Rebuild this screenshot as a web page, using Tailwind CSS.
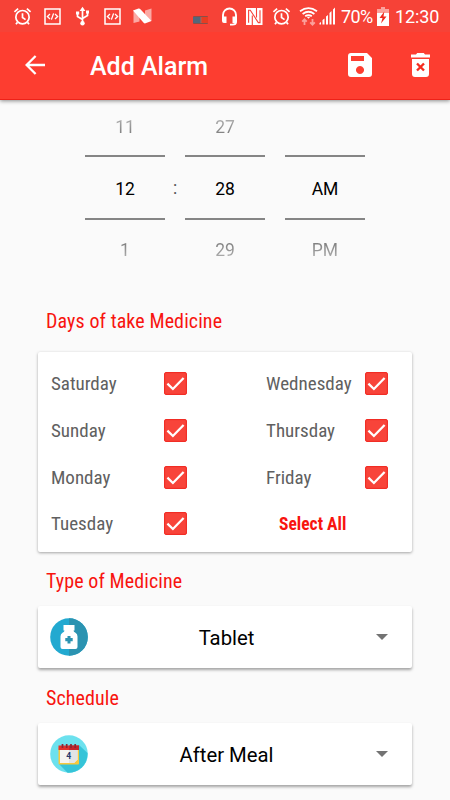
<!DOCTYPE html>
<html lang="en">
<head>
<meta charset="utf-8">
<title>Add Alarm</title>
<script src="https://cdn.jsdelivr.net/npm/@tailwindcss/browser@4"></script>
</head>
<body class="w-[450px] h-[800px] overflow-hidden bg-[#fafafa] font-['Roboto',sans-serif]">
<svg class="hidden">
  <symbol id="clock" viewBox="0 0 20 20"><circle cx="10" cy="10.7" r="7" fill="none" stroke="currentColor" stroke-width="1.8"/><path d="M10 6.5v4.6l3.2 2.2M1.5 5.2 5.4 1.8M18.5 5.2l-3.900-3.400M4.700 16.200l-1.600 2M15.300 16.200l1.600 2" fill="none" stroke="currentColor" stroke-width="1.8"/></symbol>
  <symbol id="code" viewBox="0 0 17 17"><rect x="1" y="1" width="15" height="15" fill="none" stroke="currentColor" stroke-width="1.5"/><path d="M6 6 3.400 8.500 6 11M11 6l2.600 2.500L11 11M9.600 5.400l-2.200 6.200" fill="none" stroke="currentColor" stroke-width="1.3"/></symbol>
  <symbol id="check" viewBox="0 0 23 23"><rect x=".6" y=".6" width="21.8" height="21.8" rx="1.2" fill="#f8443a" stroke="#f02018" stroke-width="1"/><path d="M3.400 11.700 8.900 17 19.600 6" fill="none" stroke="#fff" stroke-width="2.300"/></symbol>
</svg>
<header class="relative h-[100px] bg-[#fd3d30] shadow-[0_1px_4px_rgba(0,0,0,0.45)] border-b border-[#ee2118] text-white">
  <div class="flex h-8 items-center bg-[#f64237] pl-[13px]">
    <svg class="w-[19px] h-[19px] shrink-0"><use href="#clock"/></svg>
    <svg class="ml-[12px] w-[17px] h-[17px] shrink-0"><use href="#code"/></svg>
    <svg class="ml-[14px] w-[15px] h-5 shrink-0" viewBox="0 0 15 20" fill="none" stroke="currentColor" stroke-width="1.7"><path d="M7.500 3v13M2.500 7v3.500l5 3M12.500 6v3.500l-5 3"/><path d="M4.600 5 7.500.8 10.400 5zM1 5.400h3.200v3H1zM11 4.600h3v3h-3z" fill="currentColor" stroke="none"/><circle cx="7.500" cy="17.200" r="2.200" fill="currentColor" stroke="none"/></svg>
    <svg class="ml-[14px] w-[17px] h-[17px] shrink-0"><use href="#code"/></svg>
    <svg class="ml-[12px] w-[19px] h-[16px] shrink-0" viewBox="0 0 19 16" fill="currentColor"><path opacity=".55" d="M.5 2.500 6.500 6v7.500l-6 1.500zM12 2.500l6.500-2v12.500l-6.500-3z"/><path d="M0 2.500 5.500.6Q6.600.3 7.400 1.300L18.500 13l-6 2.300q-1.100.3-1.900-.6z"/></svg>
    <div class="ml-[41px] mt-[7px] h-[8px] w-[15px] shrink-0 rounded-[1px] border-y border-[#8a4f48] bg-linear-to-r from-[#52677b] from-45% to-[#e83c22] to-60%"></div>
    <svg class="ml-[13px] w-[17px] h-[19px] shrink-0" viewBox="0 0 17 19" fill="none" stroke="currentColor"><path d="M2 13V8a6.500 6.500 0 0 1 13 0v7q0 2.600-3.500 2.600H9" stroke-width="1.900"/><path d="M1 9.500h4.500V16H3q-2 0-2-2zM11.500 9.500H16V14q0 2-2 2h-2.500z" fill="currentColor" stroke="none"/></svg>
    <svg class="ml-[8px] w-[17px] h-[17px] shrink-0" viewBox="0 0 17 17"><rect width="16.500" height="17" fill="currentColor"/><path d="M3.500 17V1.800L12.300 11V0M4.200 2l8.800 13V0M5.300 17V6.500" fill="none" stroke="#f64237" stroke-width="0"/><path d="M6.300 17V7.500M10.500 0v9.500M2.600 14.800V2.200h1.700l8 12.400h1.700V2.200" fill="none" stroke="#f64237" stroke-width="1.100"/></svg>
    <svg class="ml-[9px] w-[19px] h-[19px] shrink-0"><use href="#clock"/></svg>
    <svg class="ml-[8px] w-[19px] h-[19px] shrink-0" viewBox="0 0 19 19" fill="none" stroke="currentColor" stroke-width="1.800"><path d="M1 4.200q8.500-6 17 0M3.600 6.900q5.900-4.300 11.800 0M6.200 9.300q3.300-2.400 6.600 0"/><path d="m7.700 9.700 1.800 2 1.800-2z" fill="currentColor" stroke="none"/><path opacity=".5" d="M5.500 18v-5M3.200 14.700l2.300-2.400 2.300 2.400M13.500 12v5M11.200 15.300l2.300 2.400 2.300-2.400"/></svg>
    <svg class="ml-[1px] w-[17px] h-[18px] shrink-0" viewBox="0 0 17 18" fill="currentColor"><path d="M.5 17.500v-1.500l1.500-1v2.500zM3.500 17.500V13l2-1.500v6zM7 17.500v-8l2-1.500v9.500zM10.500 17.500V6l2-2v13.500zM14 17.500V2.500L16 .5v17z"/></svg>
    <span class="ml-[5px] w-[33px] shrink-0 whitespace-nowrap text-[18px] leading-8 tracking-[-0.6px] pt-[1px]">70%</span>
    <svg class="ml-[3px] w-[12px] h-[19px] shrink-0" viewBox="0 0 12 19"><path opacity=".5" d="M4 0h4v2h4v5H0V2h4z" fill="currentColor"/><path d="M0 6h12v13H0z" fill="currentColor"/><path d="M7.300 4.500 2.500 11h3L4 16.500 9.500 9.500h-3z" fill="#f02b20"/></svg>
    <span class="ml-[6px] whitespace-nowrap text-[18px] leading-8 pt-[1px] font-[450] tracking-[-0.1px]">12:30</span>
  </div>
  <div class="flex h-[66px] items-center pl-[25px]">
    <svg class="w-5 h-5" viewBox="0 0 20 20" fill="none" stroke="currentColor" stroke-width="2.300"><path d="M20 10H2M10.600 1 1.600 10l9 9"/></svg>
    <h1 class="ml-[45px] w-[258px] text-[25px] font-medium pt-[3px]">Add Alarm</h1>
    <svg class="w-6 h-6" viewBox="0 0 24 24"><path fill="currentColor" fill-rule="evenodd" d="M3 0h16l5 5v16q0 3-3 3H3q-3 0-3-3V3q0-3 3-3zm0 3v5h13V3zm9 10a4 4 0 1 0 .01 0z"/></svg>
    <svg class="ml-[39px] w-[19px] h-[24px]" viewBox="0 0 19 24"><path fill="currentColor" d="M0 1.500h5L6.200 0h6.600L14 1.500h5v3H0zM1 6h17v15q0 3-3 3H4q-3 0-3-3z"/><path d="m6 10.500 7 7m0-7-7 7" stroke="#f52c20" stroke-width="2.400" fill="none"/></svg>
  </div>
</header>
<main>
  <section class="flex h-[183px] pl-[85px] text-[17.500px] text-center text-black">
    <div class="w-20">
      <div class="h-[55px] pt-[13px] leading-[28px]"><span class="bg-linear-to-b from-[#b5b5b5] to-[#777] bg-clip-text text-transparent">11</span></div>
      <div class="h-[65px] border-y-[2px] border-[#858585] pt-px leading-[62px] font-[380]">12</div>
      <div class="pt-[16px] leading-[28px]"><span class="bg-linear-to-b from-[#777] to-[#b5b5b5] bg-clip-text text-transparent">1</span></div>
    </div>
    <div class="w-5 pt-[56px] leading-[65px] text-[#555]">:</div>
    <div class="w-20">
      <div class="h-[55px] pt-[13px] leading-[28px]"><span class="bg-linear-to-b from-[#b5b5b5] to-[#777] bg-clip-text text-transparent">27</span></div>
      <div class="h-[65px] border-y-[2px] border-[#858585] pt-px leading-[62px] font-[380]">28</div>
      <div class="pt-[16px] leading-[28px]"><span class="bg-linear-to-b from-[#777] to-[#b5b5b5] bg-clip-text text-transparent">29</span></div>
    </div>
    <div class="ml-5 w-20 pt-[55px]">
      <div class="h-[65px] border-y-[2px] border-[#858585] pt-px leading-[62px] font-[380]">AM</div>
      <div class="pt-[16px] leading-[28px]"><span class="bg-linear-to-b from-[#777] to-[#b5b5b5] bg-clip-text text-transparent">PM</span></div>
    </div>
  </section>
  <h2 class="h-[69px] pl-[46px] pt-[22px] leading-[32px] text-[20px] text-[#f8140f] font-['Roboto_Condensed','Roboto'] font-stretch-condensed font-[390] tracking-[0.1px]">Days of take Medicine</h2>
  <section class="ml-[38px] flex h-[200px] w-[374px] rounded-[2px] bg-white pl-[13px] pt-[8px] text-[19px] text-[#606060] shadow-[0_1px_3px_rgba(0,0,0,0.35)] font-['Roboto_Condensed','Roboto'] font-stretch-condensed font-[380]">
    <div class="w-[136px]">
      <div class="flex h-[47px] items-center justify-between"><span class="pt-px">Saturday</span><svg class="w-[23px] h-[23px]"><use href="#check"/></svg></div>
      <div class="flex h-[47px] items-center justify-between"><span class="pt-px">Sunday</span><svg class="w-[23px] h-[23px]"><use href="#check"/></svg></div>
      <div class="flex h-[47px] items-center justify-between"><span class="pt-px">Monday</span><svg class="w-[23px] h-[23px]"><use href="#check"/></svg></div>
      <div class="flex h-[45px] items-center justify-between"><span class="pt-px">Tuesday</span><svg class="w-[23px] h-[23px]"><use href="#check"/></svg></div>
    </div>
    <div class="ml-[79px] w-[122px]">
      <div class="flex h-[47px] items-center justify-between"><span class="pt-px">Wednesday</span><svg class="w-[23px] h-[23px]"><use href="#check"/></svg></div>
      <div class="flex h-[47px] items-center justify-between"><span class="pt-px">Thursday</span><svg class="w-[23px] h-[23px]"><use href="#check"/></svg></div>
      <div class="flex h-[47px] items-center justify-between"><span class="pt-px">Friday</span><svg class="w-[23px] h-[23px]"><use href="#check"/></svg></div>
      <div class="flex h-[45px] items-center pl-[13px] pt-px text-[17.500px] font-bold text-[#f8140f]">Select All</div>
    </div>
  </section>
  <h2 class="h-[54px] pl-[46px] pt-[13px] leading-[32px] text-[20px] text-[#f8140f] font-['Roboto_Condensed','Roboto'] font-stretch-condensed font-[390] tracking-[0.1px]">Type of Medicine</h2>
  <section class="ml-[38px] flex h-[62px] w-[374px] items-center rounded-[2px] bg-white pl-[12px] text-black shadow-[0_2px_3px_rgba(0,0,0,0.35)]">
    <svg class="w-[38px] h-[38px]" viewBox="0 0 38 38"><circle cx="19" cy="19" r="18.800" fill="#22a9d0"/><path d="M19 .2a18.800 18.800 0 0 1 0 37.600z" fill="#2b93b1"/><path d="M13.500 7h11v5.500h-1q0 1.500 2 2.200 2 1 2 3.800V29q0 2-2 2h-13q-2 0-2-2V18.500q0-2.800 2-3.800 2-.7 2-2.200h-1z" fill="#fff"/><path d="M17.500 18h3v2h2.200v3.200h-2.200v2.200h-3v-2.200h-2.200V20h2.200z" fill="#2b93b1"/></svg>
    <span class="w-[277px] text-center text-[20.300px] font-[380] pt-[3px]">Tablet</span>
    <svg class="ml-[11px] w-3 h-[6px]" viewBox="0 0 12 6"><path d="M0 0h12L6 6z" fill="#737373"/></svg>
  </section>
  <h2 class="h-[55px] pl-[46px] pt-[14px] leading-[32px] text-[20px] text-[#f8140f] font-['Roboto_Condensed','Roboto'] font-stretch-condensed font-[390] tracking-[0.1px]">Schedule</h2>
  <section class="ml-[38px] flex h-[62px] w-[374px] items-center rounded-[2px] bg-white pl-[12px] text-black shadow-[0_2px_3px_rgba(0,0,0,0.35)]">
    <svg class="w-[38px] h-[38px]" viewBox="0 0 38 38"><circle cx="19" cy="19" r="18.800" fill="#6ce1ee"/><path d="M29 10l8.500 8A18.800 18.800 0 0 1 17.500 37.700L9 29z" fill="#35c4d8"/><rect x="8.500" y="12" width="20.500" height="17.500" rx="1" fill="#f7c83e"/><path d="M10 13h17.500v11.500L24 28H10z" fill="#f5f4f1"/><path d="M19 14h8.500v10.500L24 28h-5z" fill="#e2e4e6"/><path d="M8.500 10.500h20.500V15H8.500z" fill="#e2302b"/><path d="M19 10.500h10V15H19z" fill="#c4242b"/><path d="M12.500 9v4M16.700 9v4M21 9v4M25.200 9v4" stroke="#8a2635" stroke-width="1.700"/><text x="18.800" y="24.300" text-anchor="middle" font-family="Roboto" font-size="8.500" font-weight="700" fill="#26386c">4</text></svg>
    <span class="w-[277px] text-center text-[20.300px] font-[380] pt-[3px]">After Meal</span>
    <svg class="ml-[11px] w-3 h-[6px]" viewBox="0 0 12 6"><path d="M0 0h12L6 6z" fill="#737373"/></svg>
  </section>
</main>
</body>
</html>
